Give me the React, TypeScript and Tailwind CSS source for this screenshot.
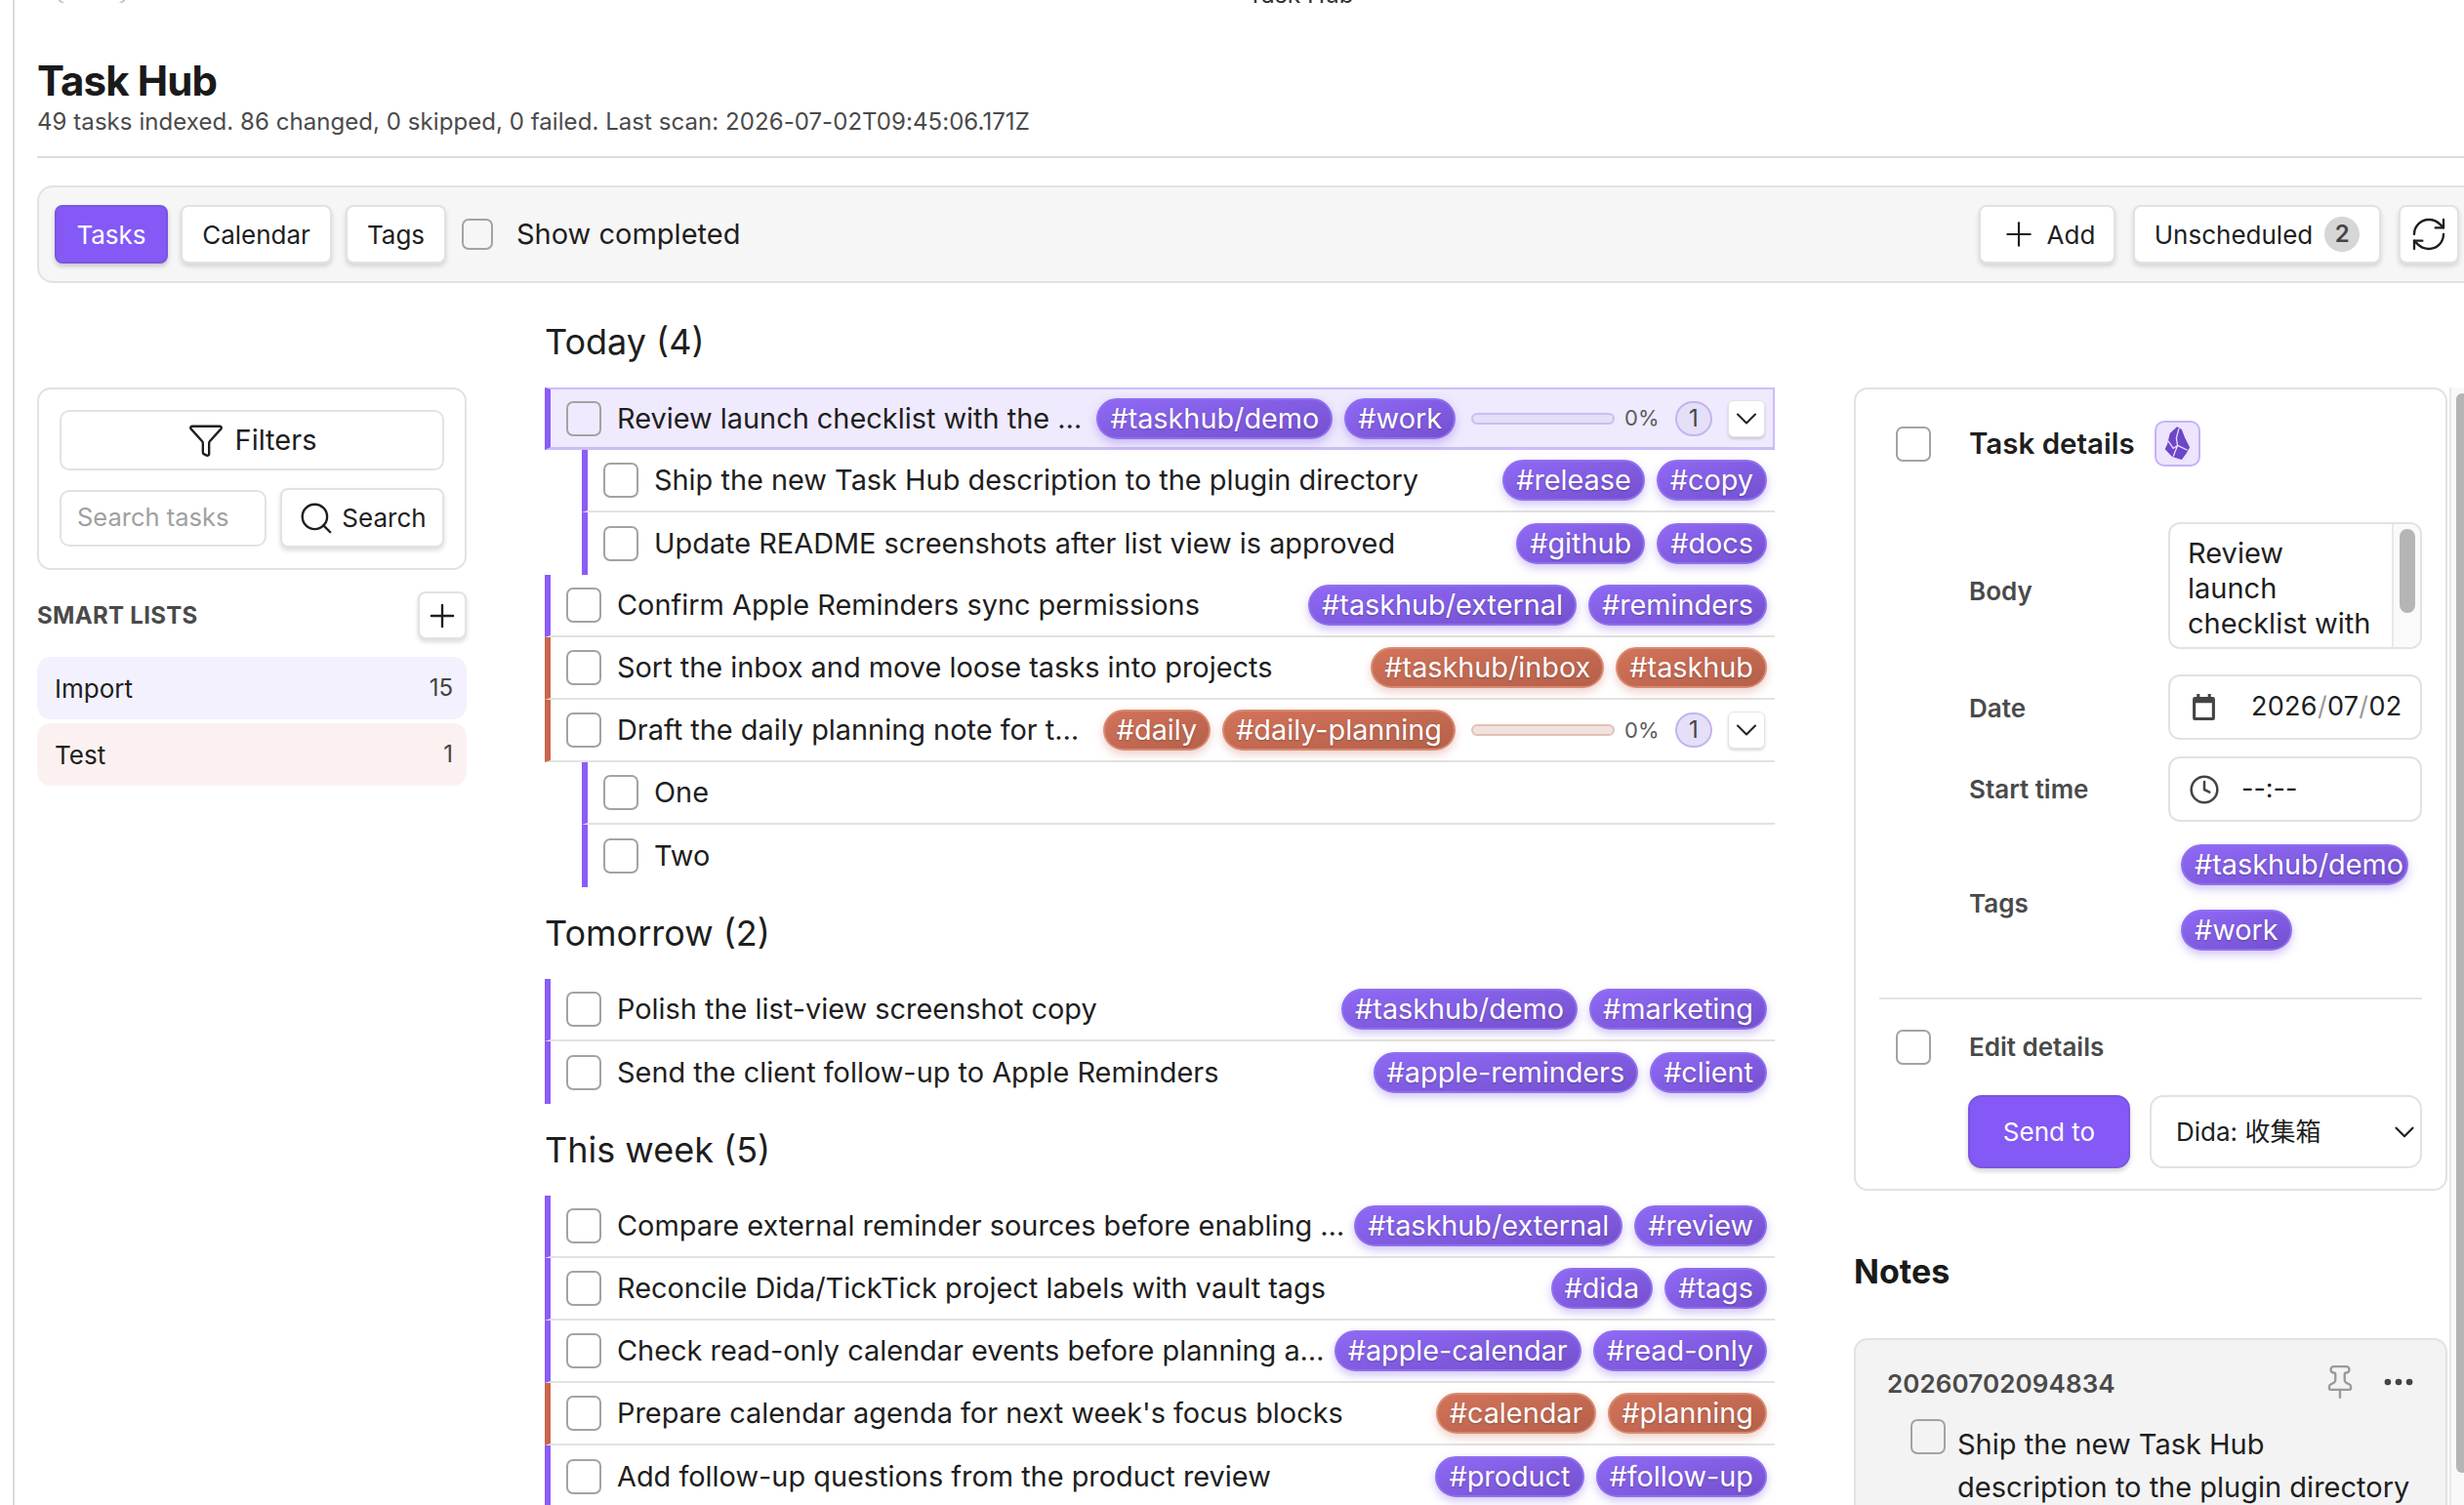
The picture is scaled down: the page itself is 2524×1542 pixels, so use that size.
import { Filter, Search, Plus, RefreshCw, ChevronDown, Pin, Ellipsis, Clock } from "lucide-react";

type Tone = "purple" | "red";

type Task = {
  title: string;
  tags: string[];
  tone: Tone;
  sub?: boolean;
  selected?: boolean;
  progress?: boolean;
};

const today: Task[] = [
  { title: "Review launch checklist with the …", tags: ["#taskhub/demo", "#work"], tone: "purple", selected: true, progress: true },
  { title: "Ship the new Task Hub description to the plugin directory", tags: ["#release", "#copy"], tone: "purple", sub: true },
  { title: "Update README screenshots after list view is approved", tags: ["#github", "#docs"], tone: "purple", sub: true },
  { title: "Confirm Apple Reminders sync permissions", tags: ["#taskhub/external", "#reminders"], tone: "purple" },
  { title: "Sort the inbox and move loose tasks into projects", tags: ["#taskhub/inbox", "#taskhub"], tone: "red" },
  { title: "Draft the daily planning note for t…", tags: ["#daily", "#daily-planning"], tone: "red", progress: true },
  { title: "One", tags: [], tone: "purple", sub: true },
  { title: "Two", tags: [], tone: "purple", sub: true },
];

const tomorrow: Task[] = [
  { title: "Polish the list-view screenshot copy", tags: ["#taskhub/demo", "#marketing"], tone: "purple" },
  { title: "Send the client follow-up to Apple Reminders", tags: ["#apple-reminders", "#client"], tone: "purple" },
];

const thisWeek: Task[] = [
  { title: "Compare external reminder sources before enabling …", tags: ["#taskhub/external", "#review"], tone: "purple" },
  { title: "Reconcile Dida/TickTick project labels with vault tags", tags: ["#dida", "#tags"], tone: "purple" },
  { title: "Check read-only calendar events before planning a…", tags: ["#apple-calendar", "#read-only"], tone: "purple" },
  { title: "Prepare calendar agenda for next week's focus blocks", tags: ["#calendar", "#planning"], tone: "red" },
  { title: "Add follow-up questions from the product review", tags: ["#product", "#follow-up"], tone: "purple" },
];

function Check({ small = false, className = "" }: { small?: boolean; className?: string }) {
  return (
    <span
      className={
        "block shrink-0 rounded-[7px] border-2 border-[#a3a3a3] " +
        (small ? "h-[32px] w-[32px] " : "h-[36px] w-[36px] ") +
        className
      }
    />
  );
}

function Tag({ label, tone, clamped = false }: { label: string; tone: Tone; clamped?: boolean }) {
  const cls =
    tone === "purple"
      ? "border-[#8f70ee] bg-linear-to-br from-[#8f69f5] to-[#7450cf] shadow-[0_4px_10px_rgba(124,88,230,0.35)]"
      : "border-[#d98a72] bg-linear-to-br from-[#d3735a] to-[#b5604a] shadow-[0_4px_10px_rgba(200,100,75,0.3)]";
  return (
    <span
      className={
        "flex h-[42px] shrink-0 items-center rounded-full border-2 text-[28.8px] text-white [text-shadow:0_1px_2px_rgba(0,0,0,0.25)] " +
        (clamped ? "pr-[3px] pl-[12px] " : "px-[12px] ") +
        cls
      }
    >
      {label}
    </span>
  );
}

function Row({ task, line }: { task: Task; line: boolean }) {
  const edge = task.tone === "purple" ? "border-l-[#8b5cf6]" : "border-l-[#c9664d]";
  return (
    <div className={task.sub ? "pl-[38px]" : ""}>
      <div
        className={
          "flex h-[64px] items-center gap-[12px] border-l-[6px] pl-[16px] " +
          (task.progress && !task.selected ? "pr-[10px] " : "pr-[8px] ") +
          edge +
          (task.selected
            ? " border-t-2 border-r-2 border-b-[3px] border-t-[#cdbcf9] border-r-[#cdbcf9] border-b-[#cdbcf9] bg-[#efeafd]"
            : line
              ? " border-b-2 border-b-[#e2e2e2]"
              : "")
        }
      >
        <Check className="mr-[4px]" />
        <span className="min-w-0 flex-1 text-[28.9px] whitespace-nowrap text-[#1e1e1e]">{task.title}</span>
        <div className="flex items-center gap-[12px]">
          {task.tags.map((t) => (
            <Tag key={t} label={t} tone={task.tone} />
          ))}
        </div>
        {task.progress && <RowProgress tone={task.tone} />}
      </div>
    </div>
  );
}

function RowProgress({ tone }: { tone: Tone }) {
  return (
    <div className="flex items-center">
      <span
        className={
          "ml-[4px] block h-[12px] w-[147px] rounded-full border-2 " +
          (tone === "purple" ? "border-[#c9bef0] bg-[#e5dff8]" : "border-[#e3c0b5] bg-[#f0e2dd]")
        }
      />
      <span className="ml-[10px] w-[38px] text-[22px] text-[#5c5c5c]">0%</span>
      <span className="ml-[14px] flex h-[36px] w-[38px] items-center justify-center rounded-full border-2 border-[#c3b5ee] bg-[#e5dff8] text-[24px] text-[#444]">
        1
      </span>
      <span className="ml-[16px] flex h-[38px] w-[38px] items-center justify-center rounded-[6px] border border-[#e3e3e3] bg-white shadow-[0_2px_3px_rgba(0,0,0,0.15)]">
        <ChevronDown size={36} strokeWidth={1.4} color="#222" />
      </span>
    </div>
  );
}

function Section({ title, tasks }: { title: string; tasks: Task[] }) {
  return (
    <section>
      <h2 className="flex h-[94px] items-center text-[36px] text-[#1e1e1e]">{title}</h2>
      <div>
        {tasks.map((t, i) => {
          const next = tasks[i + 1];
          // no rule under the last row of a group, or under the last subtask
          const line = !!next && !(t.sub && !next.sub);
          return <Row key={t.title} task={t} line={line} />;
        })}
      </div>
    </section>
  );
}

function Btn({ children, className = "" }: { children: React.ReactNode; className?: string }) {
  return (
    <span className={"flex items-center justify-center rounded-[8px] border-2 border-[#e2e2e2] bg-white text-[26px] text-[#1e1e1e] shadow-[0_3px_5px_rgba(0,0,0,0.14)] " + className}>
      {children}
    </span>
  );
}

function ObsidianMark() {
  return (
    <svg viewBox="0 0 28 36" className="h-[35px] w-[27px]">
      <path d="M13.5 0 L18.5 3 L22 12 L27 22 L23.6 28 L18.5 35 L8.4 32 L0.7 24 L3.4 18 L6 7 Z" fill="#6d46c9" />
      <path d="M15.5 2 L12.8 12 L14 20 M14 20 L24.6 25 M14 20 L9.5 31.7 M4 15 L9.5 23 L14 20" fill="none" stroke="#ece5fd" strokeWidth="1.3" />
    </svg>
  );
}

function Field({ label, children, className = "", labelClass = "" }: { label: string; children: React.ReactNode; className?: string; labelClass?: string }) {
  return (
    <div className={"flex items-center pl-[25px] " + className}>
      <span className={"w-[204px] shrink-0 pl-[91px] text-[26px] font-semibold whitespace-nowrap text-[#4a4a4a] " + labelClass}>{label}</span>
      {children}
    </div>
  );
}

export default function App() {
  return (
    <div className="relative h-[1542px] w-[2524px] overflow-hidden bg-white font-['Inter','Noto_Sans_CJK_SC',sans-serif] text-[#1e1e1e]">
      <div className="ml-[13px] h-full border-l-2 border-[#dcdcdc]">
        <div className="flex h-[3px] items-start overflow-hidden text-[24.5px] leading-[30px] text-[#333]">
          <svg viewBox="0 0 8 4" className="ml-[45px] h-[4px] w-[8px] shrink-0" fill="none" stroke="#c8c8c8" strokeWidth="2">
            <path d="M0 0 L6 4" />
          </svg>
          <svg viewBox="0 0 8 4" className="ml-[52px] h-[4px] w-[8px] shrink-0" fill="none" stroke="#c8c8c8" strokeWidth="2">
            <path d="M8 0 L2 4" />
          </svg>
          <span className="-mt-[21px] ml-[1150px] shrink-0">Task Hub</span>
        </div>

        <div className="pl-[23px]">
          <header className="h-[159px] border-b-2 border-[#dcdcdc] pt-[58px]">
            <h1 className="text-[42px] leading-[44px] font-bold tracking-[-0.9px] text-[#1a1a1a]">Task Hub</h1>
            <p className="mt-[5px] text-[24px] leading-[30px] tracking-[0.06px] text-[#4a4a4a]">
              49 tasks indexed. 86 changed, 0 skipped, 0 failed. Last scan: 2026-07-02T09:45:06.171Z
            </p>
          </header>

          <div className="mt-[28px] -mr-[20px] flex h-[100px] items-center rounded-l-[16px] border-2 border-[#e2e2e2] bg-[#f6f6f6] pl-[16px]">
            <span className="flex h-[60px] w-[116px] items-center justify-center rounded-[8px] border-2 border-[#7a55e0] bg-[#8459f5] text-[26px] text-white shadow-[0_3px_5px_rgba(0,0,0,0.2)]">
              Tasks
            </span>
            <Btn className="ml-[13px] h-[60px] w-[155px]">Calendar</Btn>
            <Btn className="ml-[14px] h-[60px] w-[103px]">Tags</Btn>
            <Check small className="ml-[16px]" />
            <span className="ml-[24px] text-[29px]">Show completed</span>
            <div className="ml-auto flex items-center gap-[18px] pr-[23px]">
              <Btn className="h-[60px] w-[140px] gap-[9px]">
                <Plus size={40} strokeWidth={1.3} />
                Add
              </Btn>
              <Btn className="h-[60px] w-[254px] gap-[12px]">
                Unscheduled
                <span className="flex h-[36px] w-[36px] items-center justify-center rounded-full bg-[#d6d6d6] text-[24px] font-semibold text-[#444]">2</span>
              </Btn>
              <Btn className="h-[60px] w-[62px]">
                <RefreshCw size={40} strokeWidth={1.4} />
              </Btn>
            </div>
          </div>

          <div className="flex items-start">
            <aside className="mt-[107px] w-[440px] shrink-0">
              <div className="rounded-[14px] border-2 border-[#e2e2e2] p-[21px]">
                <span className="flex h-[62px] items-center justify-center gap-[11px] rounded-[10px] border-2 border-[#e2e2e2] text-[29px]">
                  <Filter size={38} strokeWidth={1.5} />
                  Filters
                </span>
                <div className="mt-[18px] flex items-center gap-[14px]">
                  <span className="flex h-[58px] w-[212px] items-center rounded-[10px] border-2 border-[#e2e2e2] pl-[16px] text-[25.5px] text-[#a0a0a0]">Search tasks</span>
                  <Btn className="h-[61px] flex-1 gap-[7px]">
                    <Search size={38} strokeWidth={1.5} />
                    Search
                  </Btn>
                </div>
              </div>
              <div className="mt-[22px] flex h-[49px] items-center justify-between">
                <span className="text-[24px] font-bold tracking-[0.3px] text-[#4a4a4a]">SMART LISTS</span>
                <Btn className="h-[49px] w-[50px]">
                  <Plus size={38} strokeWidth={1.5} />
                </Btn>
              </div>
              <div className="mt-[18px] flex h-[64px] items-center justify-between rounded-[14px] bg-[#f3f1fe] pr-[14px] pl-[18px] text-[26px]">
                <span>Import</span>
                <span className="text-[24px] text-[#444]">15</span>
              </div>
              <div className="mt-[4px] flex h-[64px] items-center justify-between rounded-[14px] bg-[#fbf1f0] pr-[14px] pl-[18px] text-[26px]">
                <span>Test</span>
                <span className="text-[24px] text-[#444]">1</span>
              </div>
            </aside>

            <main className="ml-[80px] w-[1260px] shrink-0 pt-[13px]">
              <Section title="Today (4)" tasks={today} />
              <Section title="Tomorrow (2)" tasks={tomorrow} />
              <Section title="This week (5)" tasks={thisWeek} />
            </main>

            <div className="mt-[107px] ml-[81px] flex h-[1200px] shrink-0">
              <div className="w-[608px]">
                <div className="h-[823px] rounded-[14px] border-2 border-[#e2e2e2] pt-[32px] pr-[24px] pl-[24px]">
                  <div className="flex items-center pl-[17px]">
                    <Check />
                    <span className="ml-[39px] text-[29.5px] font-semibold">Task details</span>
                    <span className="ml-[20px] flex h-[47px] w-[47px] items-center justify-center rounded-[10px] border-2 border-[#c6b2fa] bg-[#ece5fd]">
                      <ObsidianMark />
                    </span>
                  </div>
                  <div className="mt-[57px] -ml-[24px]">
                    <Field label="Body" labelClass="mt-[10px]">
                      <div className="ml-[91px] flex h-[130px] w-[260px] overflow-hidden rounded-[12px] border-2 border-[#e2e2e2]">
                        <p className="w-[227px] shrink-0 overflow-hidden pt-[12px] pr-[14px] pl-[18px] text-[29px] leading-[36px]">Review launch checklist with the team</p>
                        <div className="flex-1 border-l-2 border-[#e8e8e8] bg-[#fafafa] pt-[5px] pl-[6px]">
                          <span className="block h-[86px] w-[16px] rounded-full bg-[#b5b5b5]" />
                        </div>
                      </div>
                    </Field>
                    <Field label="Date" className="mt-[26px]" labelClass="mt-[2px]">
                      <div className="ml-[91px] flex h-[67px] w-[260px] items-center rounded-[12px] border-2 border-[#e2e2e2] pl-[22px] text-[27px] tracking-[0.3px]">
                        <svg viewBox="0 0 24 26" className="h-[27px] w-[25px]" fill="#444">
                          <path d="M5 0h3v3h8V0h3v3h2a2 2 0 0 1 2 2v19a2 2 0 0 1-2 2H3a2 2 0 0 1-2-2V5a2 2 0 0 1 2-2h2V0Zm-1 9v14h16V9H4Z" />
                        </svg>
                        <span className="ml-[36px] whitespace-nowrap">2026<span className="text-[#999]">/</span>07<span className="text-[#999]">/</span>02</span>
                      </div>
                    </Field>
                    <Field label="Start time" className="mt-[17px]">
                      <div className="ml-[91px] flex h-[67px] w-[260px] items-center rounded-[12px] border-2 border-[#e2e2e2] pl-[19px] text-[27px]">
                        <Clock size={32} strokeWidth={1.9} color="#444" />
                        <span className="ml-[22px]">--:--</span>
                      </div>
                    </Field>
                    <Field label="Tags" className="mt-[23px]" labelClass="mt-[12px]">
                      <div className="ml-[104px] flex flex-col items-start gap-[25px]">
                        <Tag label="#taskhub/demo" tone="purple" clamped />
                        <Tag label="#work" tone="purple" />
                      </div>
                    </Field>
                  </div>
                  <div className="mt-[48px] border-t-2 border-[#e2e2e2] pt-[29px]">
                    <div className="flex items-center pl-[17px]">
                      <Check />
                      <span className="ml-[39px] text-[26px] font-semibold text-[#4a4a4a]">Edit details</span>
                    </div>
                    <div className="mt-[30px] flex gap-[20px] pl-[91px]">
                      <span className="flex h-[75px] w-[166px] items-center justify-center rounded-[14px] border-2 border-[#7a55e0] bg-[#8459f5] text-[26px] text-white shadow-[0_3px_5px_rgba(0,0,0,0.18)]">Send to</span>
                      <span className="flex h-[75px] w-[279px] items-center justify-between rounded-[14px] border-2 border-[#e2e2e2] pl-[25px] text-[26px]">
                        Dida: 收集箱
                        <ChevronDown size={34} strokeWidth={1.5} className="-mr-[1px]" />
                      </span>
                    </div>
                  </div>
                </div>
                <h2 className="mt-[61px] text-[34px] leading-[44px] font-bold text-[#1a1a1a]">Notes</h2>
                <div className="mt-[46px] h-[300px] rounded-[14px] border-2 border-[#e2e2e2] bg-[#f3f3f3] pt-[24px] pr-[34px] pl-[32px]">
                  <div className="flex h-[38px] items-center justify-between">
                    <span className="mt-[2px] text-[26px] font-semibold tracking-[0.1px] text-[#4a4a4a]">20260702094834</span>
                    <div className="-mr-[5px] flex items-center gap-[22px]">
                      <Pin size={38} strokeWidth={1.5} color="#9a9a9a" />
                      <Ellipsis size={38} strokeWidth={2.2} color="#444" />
                    </div>
                  </div>
                  <div className="mt-[19px] ml-[24px] flex">
                    <Check />
                    <p className="mt-[4px] ml-[12px] text-[29px] leading-[44px] whitespace-nowrap">
                      Ship the new Task Hub
                      <br />
                      description to the plugin directory
                    </p>
                  </div>
                </div>
              </div>
              <div className="ml-[2px] w-[15px] border-l-2 border-[#e8e8e8] bg-[#f9f9f9] pt-[6px] pl-[5px]">
                <span className="block h-[1106px] w-[12px] rounded-full bg-[#b5b5b5]" />
              </div>
            </div>
          </div>
        </div>
      </div>
    </div>
  );
}
